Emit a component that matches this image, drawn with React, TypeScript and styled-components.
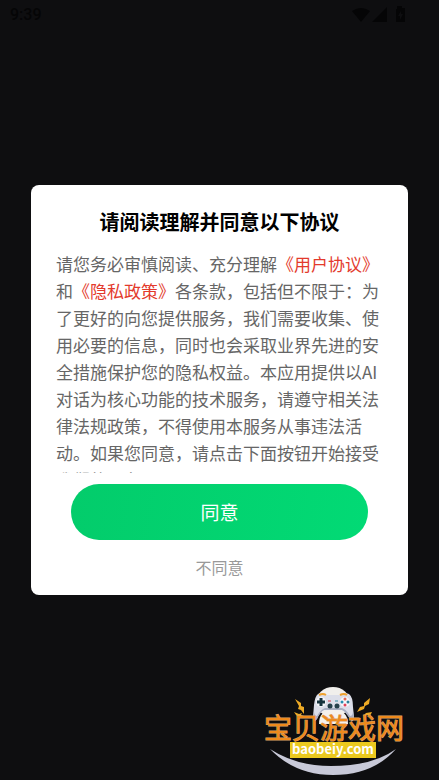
import React from 'react';
import styled, { createGlobalStyle } from 'styled-components';

const GlobalStyle = createGlobalStyle`
  * { box-sizing: border-box; }
  body {
    margin: 0;
    background: #0e0e10;
    font-family: "Noto Sans CJK SC", sans-serif;
  }
  button { font: inherit; border: 0; cursor: pointer; }
`;

const Screen = styled.div`
  position: relative;
  display: grid;
  grid-template-rows: 1fr auto 1fr;
  min-height: 100vh;
`;

const StatusBar = styled.header`
  display: flex;
  align-items: center;
  justify-content: space-between;
  align-self: start;
  height: 30px;
  padding: 0 33px 0 10px;
  color: #050506;
`;

const Clock = styled.time`
  font: 500 16px/20px Roboto, sans-serif;
`;

const Dialog = styled.section`
  display: flex;
  flex-direction: column;
  margin: 0 31px;
  padding: 23px 25px 16px;
  border-radius: 8px;
  background: #fff;
`;

const Title = styled.h1`
  margin: 0 0 14px;
  font-size: 20px;
  line-height: 28px;
  font-weight: 700;
  text-align: center;
  color: #000;
`;

const Terms = styled.div`
  height: 223px;
  overflow: hidden;
  font-size: 17px;
  line-height: 27px;
  color: #666;

  p { margin: 0; }
`;

const TermsLink = styled.a`
  color: #e33a2c;
  text-decoration: none;
`;

const AgreeButton = styled.button`
  height: 56px;
  margin: 11px 15px 15px;
  padding: 0 0 2px;
  border-radius: 28px;
  background: linear-gradient(100deg, #03cc6b, #02da75);
  color: #fff;
  && { font-size: 19px; }
`;

const DeclineButton = styled.button`
  align-self: center;
  padding: 0 16px;
  background: none;
  color: #999;
  && { font-size: 16px; line-height: 24px; }
`;

const Watermark = styled.svg`
  position: absolute;
  right: 27px;
  bottom: 2px;
  width: 150px;
  height: 96px;
`;

const StatusIcons = () => (
  <svg width="54" height="18" viewBox="0 0 54 18" fill="currentColor" aria-hidden="true">
    <path d="M0 5Q9-1 18 5L9 16Z" />
    <path d="M20 16L35 1V16Z" />
    <path d="M43 3h2V0h5v2h3v14h-9V3Z" />
    <path d="M49 5l-3 5h2v4l3-6h-2Z" fill="#0e0e10" />
  </svg>
);

const SiteLogo = () => (
  <Watermark viewBox="0 0 150 96" role="img" aria-label="宝贝游戏网 baobeiy.com">
    <path d="M8 67Q34 84 69 84Q111 84 134 67Q111 93 71 93Q33 93 8 67Z" fill="#c8c9d8" />
    <ellipse cx="71" cy="20" rx="17" ry="15" fill="#f1efec" />
    <path d="M56 12Q59 10 64 13H78Q83 10 87 12Q91 15 91 25L92 35Q91 41 88 37Q84 30 80 28H62Q58 30 55 37Q51 41 51 35L52 23Q53 14 56 12Z" fill="#dcdee9" />
    <path d="M52 29Q52 34 55 34Q59 27 63 26H80Q84 27 88 34Q91 34 91 29L92 36Q91 42 88 37Q84 30 80 28H62Q58 30 55 37Q51 42 51 36Z" fill="#aaafc2" />
    <path d="M57 42Q57 28 71 28Q86 28 86 42Z" fill="#f5f1eb" />
    <path d="M57 13q4-2 7 0M78 13q4-2 7 0" fill="none" stroke="#efa12d" strokeWidth="2" />
    <circle cx="59" cy="20" r="5" fill="#f4f5f9" />
    <path d="M55 20h8M59 16v8" stroke="#17333d" strokeWidth="3" />
    <circle cx="83" cy="20" r="5" fill="#f7f7fb" />
    <circle cx="83" cy="17" r="1.5" fill="#e36b57" />
    <circle cx="83" cy="23" r="1.5" fill="#e04057" />
    <circle cx="80" cy="20" r="1.5" fill="#278eb0" />
    <circle cx="86" cy="20" r="1.5" fill="#2c8099" />
    <circle cx="68" cy="24" r="2.5" fill="#25404b" />
    <circle cx="75" cy="24" r="2.5" fill="#25404b" />
    <path d="M66 19h3" stroke="#d83c4f" />
    <path d="M73 19h3" stroke="#34869c" />
    <g fill="#edaa25">
      <path d="M33 17l6 4v3l3 1v7l-3-4-3-1 1-3Z" />
      <path d="M32 30l5 2 3-1-1 2 3 1-5 2-3-3Z" />
      <path d="M108 16l-6 5v3l-4 1-3 5 7-3 1-3 4-2Z" />
      <path d="M110 30l-6 1-3 3 5-1 2 1Z" />
    </g>
    <text x="2" y="57" fontFamily="Noto Sans CJK SC, sans-serif" fontSize="28" fontWeight="400"
      fill="#ee8a1c" stroke="#d9a066" strokeWidth="1" paintOrder="stroke">宝贝游戏网</text>
    <rect x="28" y="60" width="86" height="16" fill="#ebc91f" />
    <text x="71" y="72" textAnchor="middle" fontFamily="Noto Sans CJK SC, sans-serif" fontSize="13" fontWeight="700" fill="#fff">baobeiy.com</text>
  </Watermark>
);

export default function App() {
  return (
    <>
      <GlobalStyle />
      <Screen>
        <StatusBar>
          <Clock>9:39</Clock>
          <StatusIcons />
        </StatusBar>
        <Dialog role="dialog" aria-labelledby="terms-title">
          <Title id="terms-title">请阅读理解并同意以下协议</Title>
          <Terms>
            <p>
              请您务必审慎阅读、充分理解<TermsLink href="#user">《用户协议》</TermsLink>和<TermsLink href="#privacy">《隐私政策》</TermsLink>各条款，包括但不限于：为了更好的向您提供服务，我们需要收集、使用必要的信息，同时也会采取业界先进的安全措施保护您的隐私权益。本应用提供以AI对话为核心功能的技术服务，请遵守相关法律法规政策，不得使用本服务从事违法活动。如果您同意，请点击下面按钮开始接受我们的服务。
            </p>
          </Terms>
          <AgreeButton type="button">同意</AgreeButton>
          <DeclineButton type="button">不同意</DeclineButton>
        </Dialog>
        <SiteLogo />
      </Screen>
    </>
  );
}
